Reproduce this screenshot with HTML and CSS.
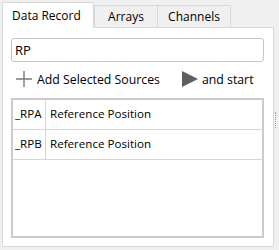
FILE: index.html
```html
<!DOCTYPE html>
<html lang="en">
<head>
    <meta charset="UTF-8">
    <title>Data Record</title>
    <link rel="stylesheet" href="styles.css">
</head>
<body>
    <div class="window">
        <div class="panel">
            <div class="tabs">
                <div class="tab active">Data Record</div>
                <div class="tab">Arrays</div>
                <div class="tab">Channels</div>
            </div>

            <div class="pane">
                <input class="filter" type="text" value="RP">

                <div class="toolbar">
                    <button class="tool">
                        <svg width="18" height="18" viewBox="0 0 18 18">
                            <path d="M9 1v16M1 9h16" stroke="#7a7a7a" stroke-width="1.4" fill="none"/>
                        </svg>
                        <span>Add Selected Sources</span>
                    </button>
                    <button class="tool start">
                        <svg width="16" height="16" viewBox="0 0 16 16">
                            <path d="M0 0L16 8L0 16Z" fill="#5f5f5f"/>
                        </svg>
                        <span>and start</span>
                    </button>
                </div>

                <div class="table">
                    <div class="row">
                        <div class="cell name">_RPA</div>
                        <div class="cell">Reference Position</div>
                    </div>
                    <div class="row">
                        <div class="cell name">_RPB</div>
                        <div class="cell">Reference Position</div>
                    </div>
                </div>
            </div>
        </div>

        <div class="splitter"></div>
    </div>
</body>
</html>
```

FILE: styles.css
```css
body {
    margin: 0;
    background: #f0f0f0;
    font-family: "Open Sans", "Liberation Sans", sans-serif;
    font-size: 12px;
    color: #000;
}

.window {
    display: flex;
    height: 250px;
    padding: 2px 0 0 2px;
    box-sizing: border-box;
}

.panel {
    width: 274px;
    display: flex;
    flex-direction: column;
}

.tabs {
    display: flex;
    align-items: flex-end;
    height: 25px;
    position: relative;
    z-index: 1;
}

.tab {
    height: 22px;
    line-height: 21px;
    padding: 0 10px;
    border: 1px solid #d9d9d9;
    border-bottom: none;
    background: #f0f0f0;
    box-sizing: border-box;
    margin-left: -1px;
}

.tab.active {
    height: 26px;
    line-height: 25px;
    margin-left: 0;
    margin-bottom: -1px;
    background: #fff;
    width: 92px;
    padding-left: 9px;
}

.tabs .tab:nth-child(2) { width: 64px; text-align: center; padding: 0; margin-left: 0; }
.tabs .tab:nth-child(3) { width: 74px; text-align: center; padding: 0; margin-left: -1px; }

.pane {
    flex: 1;
    background: #fff;
    border: 1px solid #d9d9d9;
    padding: 10px 9px 8px 8px;
    margin-bottom: 3px;
    display: flex;
    flex-direction: column;
}

.filter {
    height: 24px;
    box-sizing: border-box;
    border: 1px solid #c6c6c6;
    border-radius: 3px;
    padding: 0 3px;
    font: inherit;
    font-size: 13px;
    outline: none;
}

.toolbar {
    display: flex;
    align-items: center;
    gap: 22px;
    height: 34px;
    padding-left: 4px;
}

.tool {
    display: flex;
    align-items: center;
    gap: 4px;
    border: none;
    background: none;
    padding: 0;
    font: inherit;
    font-size: 12.3px;
    color: #000;
}

.table {
    flex: 1;
    border: 2px solid #cbcbcb;
    margin-top: 2px;
}

.row {
    display: flex;
    height: 29px;
    border-bottom: 1px solid #d6d6d6;
}

.cell {
    line-height: 28px;
    padding-left: 4px;
    font-size: 11.6px;
}

.cell.name {
    width: 30px;
    padding-left: 2px;
    border-right: 1px solid #d6d6d6;
}

.splitter {
    width: 3px;
    margin: 110px 0 0 1px;
    height: 16px;
    border-left: 1px dotted #a0a0a0;
}
```
